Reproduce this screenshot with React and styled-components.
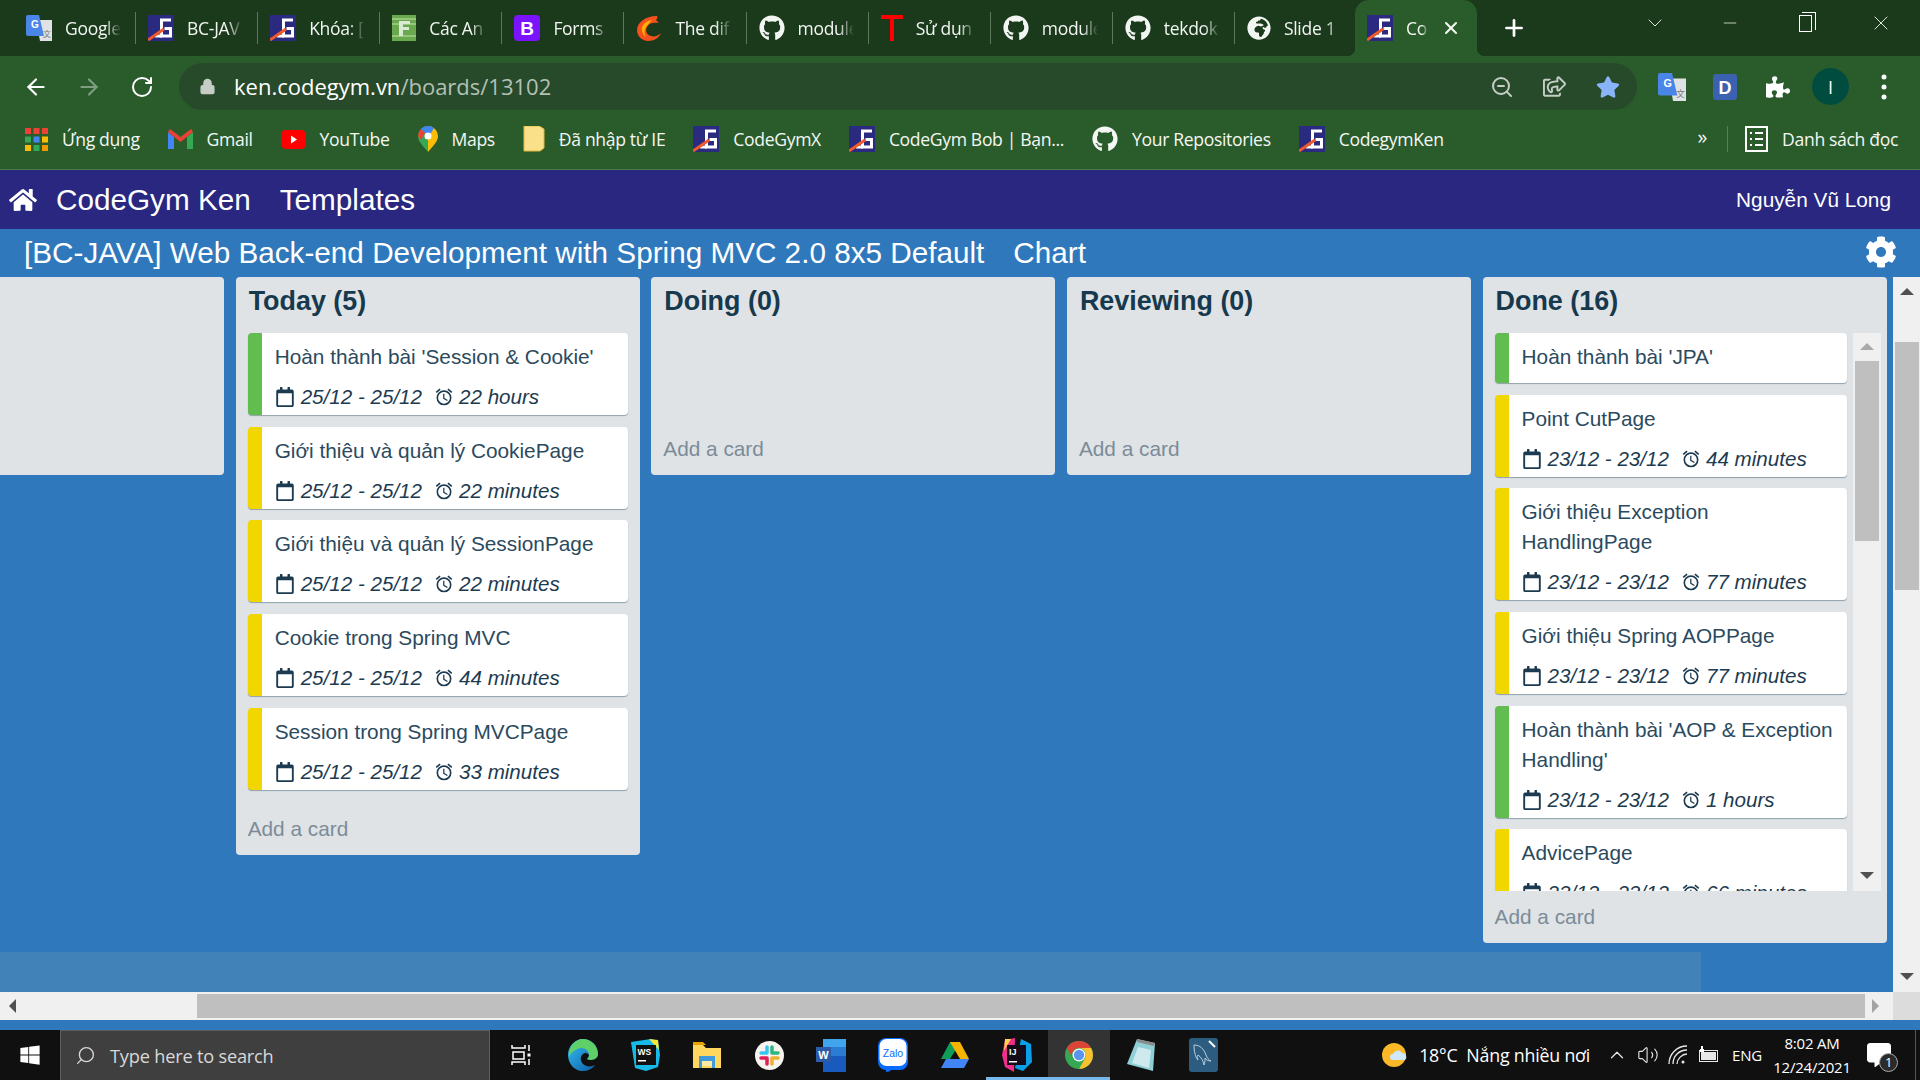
import React from 'react';
import styled, { createGlobalStyle } from 'styled-components';
import { ArrowLeft, ArrowRight, RotateCw, Search, ZoomOut, Volume2, ChevronUp, ChevronDown, Minus, X, Plus, Lock } from 'lucide-react';
import { FaGithub, FaGlobeAfrica, FaHome, FaCog, FaRegCalendar, FaStar, FaRegShareSquare, FaPuzzlePiece, FaWindows, FaCommentAlt } from 'react-icons/fa';
import { MdOutlineAlarm } from 'react-icons/md';

const GlobalStyle = createGlobalStyle`
  html, body { margin: 0; padding: 0; background: #2f78bc; }
  * { box-sizing: border-box; }
`;

const CHROME_FONT = `"Open Sans", "Noto Sans", sans-serif`;

const Page = styled.div`
  width: 1920px;
  height: 1080px;
  overflow: hidden;
  display: flex;
  flex-direction: column;
  font-family: "Liberation Sans", Arial, sans-serif;
`;

/* browser chrome */
const TabStrip = styled.div`
  height: 56px;
  background: #1a3a1b;
  display: flex;
  align-items: center;
  padding-left: 14px;
  font-family: ${CHROME_FONT};
`;

const Tab = styled.div`
  width: 122.1px;
  display: flex;
  align-items: center;
  gap: 13px;
  padding: 0 14px 0 12px;
  color: #f2f5f2;
  font-size: 17.5px;
  letter-spacing: -0.3px;
  height: 32px;
  border-right: ${(p) => (p.$last ? 'none' : '1px solid #5b7a5c')};
`;

const ActiveTab = styled(Tab)`
  height: 56px;
  width: 122px;
  margin-left: -2px;
  padding-right: 16px;
  background: #2a5c2b;
  border-right: none;
  border-radius: 14px 14px 0 0;
  position: relative;
  &::before,
  &::after {
    content: '';
    position: absolute;
    bottom: 0;
    width: 8px;
    height: 8px;
  }
  &::before {
    left: -8px;
    background: radial-gradient(circle at 0 0, transparent 8px, #2a5c2b 8.5px);
  }
  &::after {
    right: -8px;
    background: radial-gradient(circle at 100% 0, transparent 8px, #2a5c2b 8.5px);
  }
`;

const TabLabel = styled.span`
  flex: 1;
  min-width: 0;
  overflow: hidden;
  white-space: nowrap;
  -webkit-mask-image: linear-gradient(to right, #000 72%, transparent);
  mask-image: linear-gradient(to right, #000 72%, transparent);
`;

const NewTab = styled.div`
  width: 74px;
  display: flex;
  justify-content: center;
  color: #fff;
`;

const WindowControls = styled.div`
  margin-left: auto;
  display: flex;
  align-items: center;
  color: #dfe6df;
  margin-top: -10px;
  padding-right: 1px;
`;

const WindowButton = styled.div`
  width: 75.5px;
  display: flex;
  justify-content: center;
`;

const RestoreIcon = styled.div`
  width: 13px;
  height: 17px;
  border: 1px solid #fff;
  position: relative;
  &::after {
    content: '';
    position: absolute;
    top: -4px;
    right: -5px;
    width: 13px;
    height: 17px;
    border-top: 1px solid #fff;
    border-right: 1px solid #fff;
  }
`;

const Toolbar = styled.div`
  height: 56px;
  background: #2a5c2b;
  display: flex;
  align-items: center;
  padding-left: 9px;
  padding-top: 5px;
  font-family: ${CHROME_FONT};
`;

const ToolButton = styled.div`
  width: 53px;
  display: flex;
  justify-content: center;
  align-items: center;
  color: ${(p) => p.$color || '#fff'};
`;

const UrlBar = styled.div`
  width: 1458px;
  height: 47px;
  margin-left: 11px;
  margin-right: 8px;
  border-radius: 24px;
  background: #274a2b;
  display: flex;
  align-items: center;
  padding-left: 20px;
  padding-right: 3px;
`;

const UrlText = styled.div`
  margin: -2px 0 0 18px;
  flex: 1;
  font-size: 22px;
  color: #fff;
  & span { color: #b4c0b5; }
`;

const Avatar = styled.div`
  width: 37px;
  height: 37px;
  border-radius: 50%;
  background: #004d40;
  color: #fff;
  font-size: 18px;
  display: flex;
  justify-content: center;
  align-items: center;
`;

const BookmarkBar = styled.div`
  height: 58px;
  background: #2a5c2b;
  border-bottom: 1px solid #4d7a4e;
  display: flex;
  align-items: center;
  padding-left: 25px;
  padding-bottom: 3px;
  font-family: ${CHROME_FONT};
  font-size: 17.6px;
  letter-spacing: -0.35px;
  color: #f4f7f4;
`;

const Bookmark = styled.div`
  display: flex;
  align-items: center;
  gap: 14px;
  margin-right: 28px;
  white-space: nowrap;
`;

const BookmarkMore = styled.div`
  margin-left: auto;
  font-size: 20px;
  padding-right: 20px;
  border-right: 1px solid #5b7a5c;
  height: 26px;
  line-height: 22px;
`;

const ReadingList = styled(Bookmark)`
  margin: 0 22px 0 17px;
`;

/* app */
const Nav = styled.div`
  height: 59px;
  background: #29277f;
  color: #fff;
  display: flex;
  align-items: center;
  padding: 1px 29px 0 9px;
  font-size: 29.7px;
`;

const NavLink = styled.div`
  margin-left: ${(p) => p.$gap}px;
`;

const NavUser = styled.div`
  margin-left: auto;
  font-size: 20.8px;
`;

const BoardHeader = styled.div`
  height: 48px;
  background: #2f78bc;
  color: #fff;
  display: flex;
  align-items: center;
  padding: 0 24px;
  font-size: 29.7px;
  & > span + span { margin-left: 29px; }
  & > svg { margin-left: auto; margin-right: -1px; margin-top: -3px; }
`;

const Workspace = styled.div`
  flex: 1;
  min-height: 0;
  display: flex;
  background: #2f78bc;
`;

const BoardArea = styled.div`
  width: 1893px;
  display: flex;
  flex-direction: column;
`;

const Lists = styled.div`
  height: 675px;
  display: flex;
  align-items: flex-start;
  gap: 11.65px;
`;

const List = styled.div`
  width: ${(p) => p.$width || 404}px;
  flex-shrink: 0;
  background: #dfe3e6;
  border-radius: ${(p) => (p.$cut ? '0 4px 4px 0' : '4px')};
  height: ${(p) => (p.$cut ? '198px' : 'auto')};
`;

const ListTitle = styled.div`
  height: 56px;
  padding: 6px 0 0 13px;
  font-weight: bold;
  font-size: 26.9px;
  line-height: 36px;
  color: #17394d;
`;

const CardScroller = styled.div`
  display: flex;
  justify-content: space-between;
  padding: 0 6px 0 12px;
  height: 558px;
  overflow: hidden;
`;

const CardList = styled.div`
  padding: 0 12px 1.5px;
  min-height: 90px;
`;

const Column = styled.div`
  width: 352px;
`;

const Card = styled.div`
  display: flex;
  flex-direction: column;
  background: #fff;
  border-radius: 4px;
  border-left: 14px solid ${(p) => (p.$done ? '#61bd4f' : '#f2d600')};
  box-shadow: 0 1px 1px #8fa0ac;
  padding: 9px 8px 0 13px;
  margin-bottom: 11.7px;
  color: #2b4a5e;
  font-size: 20.8px;
  line-height: 30px;
`;

const CardTitle = styled.div`
  margin-bottom: 11px;
`;

const CardMeta = styled.div`
  display: flex;
  align-items: center;
  height: 28px;
  margin-bottom: 4px;
  font-style: italic;
  color: #1d3b50;
  font-size: 20.6px;
  & > svg { margin-right: 6px; }
`;

const MetaSpent = styled.span`
  margin-left: 12px;
  display: flex;
  align-items: center;
  gap: 5px;
`;

const AddCard = styled.div`
  height: 52px;
  padding-left: 12px;
  display: flex;
  align-items: center;
  color: #7b8c98;
  font-size: 20.8px;
`;

const Band = styled.div`
  width: 1701px;
  height: 40px;
  background: #4182b9;
`;

const ScrollTrack = styled.div`
  background: #f0f0f0;
  display: flex;
  flex-direction: ${(p) => (p.$horizontal ? 'row' : 'column')};
  align-items: center;
  position: relative;
`;

const InnerScroll = styled(ScrollTrack)`
  width: 28px;
  height: 558px;
  padding-top: 10px;
`;

const PageScroll = styled(ScrollTrack)`
  width: 27px;
  height: 715px;
  padding-top: 11px;
`;

const BottomBar = styled.div`
  height: 28px;
  display: flex;
`;

const HorizontalScroll = styled(ScrollTrack)`
  width: 1893px;
  padding-left: 9px;
`;

const Corner = styled.div`
  width: 27px;
  background: #dcdcdc;
`;

const Thumb = styled.div`
  background: #bfbfbf;
  flex-shrink: 0;
`;

const VerticalThumb = styled(Thumb)`
  width: 24px;
  height: ${(p) => p.$size}px;
  margin-top: ${(p) => p.$offset}px;
`;

const HorizontalThumb = styled(Thumb)`
  height: 24px;
  width: 1668px;
  margin-left: 181px;
`;

const Arrow = styled.div`
  width: 0;
  height: 0;
  flex-shrink: 0;
  border-style: solid;
  border-color: transparent;
  ${(p) => p.$dir === 'up' && `border-width: 0 7px 7px; border-bottom-color: ${p.$color};`}
  ${(p) => p.$dir === 'down' && `border-width: 7px 7px 0; border-top-color: ${p.$color}; margin-top: auto; margin-bottom: 12px;`}
  ${(p) => p.$dir === 'left' && `border-width: 7px 7px 7px 0; border-right-color: ${p.$color};`}
  ${(p) => p.$dir === 'right' && `border-width: 7px 0 7px 7px; border-left-color: ${p.$color}; margin-left: 7px;`}
`;

const BlueStrip = styled.div`
  height: 10px;
  background: #2f78bc;
`;

/* taskbar */
const Taskbar = styled.div`
  height: 50px;
  background: #101010;
  display: flex;
  align-items: stretch;
  color: #fff;
  font-family: ${CHROME_FONT};
`;

const StartButton = styled.div`
  width: 60px;
  display: flex;
  align-items: center;
  justify-content: center;
`;

const SearchBox = styled.div`
  width: 430px;
  background: #3f3f3f;
  border: 1px solid #5e5e5e;
  border-bottom: none;
  display: flex;
  align-items: center;
  gap: 14px;
  padding-left: 14px;
  font-size: 18.2px;
  color: #d8d8d8;
  letter-spacing: -0.2px;
  & svg { transform: scaleX(-1); }
`;

const TaskIcon = styled.div`
  width: 62px;
  display: flex;
  align-items: center;
  justify-content: center;
  background: ${(p) => (p.$active ? '#333' : 'transparent')};
  box-shadow: ${(p) => (p.$open ? 'inset 0 -3px 0 #76b9ed' : 'none')};
`;

const Tray = styled.div`
  margin-left: auto;
  display: flex;
  align-items: center;
  font-size: 17.8px;
  letter-spacing: -0.2px;
  white-space: nowrap;
`;

const Weather = styled.div`
  display: flex;
  align-items: center;
  gap: 11px;
  margin-right: 12px;
`;

const TrayIcon = styled.div`
  width: 30.5px;
  display: flex;
  justify-content: center;
  color: #e8e8e8;
`;

const TrayLang = styled.div`
  margin-left: 8px;
  font-size: 15px;
`;

const Clock = styled.div`
  width: 82px;
  margin-left: 9px;
  text-align: center;
  font-size: 15px;
  line-height: 24px;
`;

const Notify = styled.div`
  width: 52px;
  display: flex;
  justify-content: center;
  position: relative;
  margin-right: 10px;
`;

const NotifyBadge = styled.span`
  position: absolute;
  left: 26px;
  top: 10px;
  width: 19px;
  height: 19px;
  border-radius: 50%;
  background: #2b2b2b;
  border: 1px solid #aaa;
  font-size: 13px;
  line-height: 17px;
  text-align: center;
`;

const DesktopEdge = styled.div`
  width: 1px;
  height: 50px;
  background: #555;
  margin-right: 4px;
`;

/* small logos */
const CodeGymLogo = ({ size = 26 }) => (
  <svg width={size} height={size} viewBox="0 0 26 26">
    <rect width="26" height="26" fill="#2a2a80" />
    <path d="M23 5H13.500V21h9V13.500h-6" fill="none" stroke="#fff" strokeWidth="3" />
    <path d="M7 21h7" stroke="#fff" strokeWidth="3" />
    <path d="M0 25L16 14" stroke="#f0592a" strokeWidth="3" />
  </svg>
);

const TranslateLogo = ({ size = 26 }) => (
  <svg width={size} height={size} viewBox="0 0 26 26">
    <path d="M10 5h16v21H14z" fill="#dfe3e6" />
    <path d="M0 2Q0 0 2 0h11l5 21H2q-2 0-2-2z" fill="#4a86e8" />
    <text x="5" y="13" fontFamily="Liberation Sans" fontWeight="bold" fontSize="10" fill="#fff">G</text>
    <text x="17" y="22" fontFamily="Noto Sans CJK SC" fontSize="8" fill="#777">文</text>
  </svg>
);

const SheetsLogo = () => (
  <svg width="24" height="26" viewBox="0 0 24 26">
    <rect width="24" height="26" fill="#6aa84f" />
    <path d="M0 4h24M0 9h24M0 21h24" stroke="#a5cf85" strokeWidth="1.5" />
    <path d="M7 6h11v3h-7v3h6v3h-6v6H7z" fill="#d9ead3" />
  </svg>
);

const BootstrapLogo = () => (
  <svg width="26" height="26" viewBox="0 0 26 26">
    <rect width="26" height="26" rx="4" fill="#7a14ff" />
    <text x="13" y="20" textAnchor="middle" fontFamily="Liberation Sans" fontWeight="bold" fontSize="19" fill="#fff">B</text>
  </svg>
);

const SwirlLogo = () => (
  <svg width="26" height="26" viewBox="0 0 26 26">
    <path d="M21 1C9 1 1 8 1 15c0 7 6 11 11 11 6 0 11-3 13-8-3 3-7 4-10 3-4-1-6-5-4-9 2-4 6-5 12-4l-3-3c1-1 2-3 1-4z" fill="#f4511e" />
    <path d="M16 5C9 6 5 11 6 16c1 3 2 5 4 6-2-3-2-7 0-10 2-3 4-5 6-7z" fill="#ffb300" />
  </svg>
);

const TLogo = () => (
  <svg width="22" height="26" viewBox="0 0 22 26">
    <path d="M0 0h22v4H13v22H9V4H0z" fill="#f00" />
  </svg>
);

const AppsGrid = () => (
  <svg width="23" height="23" viewBox="0 0 23 23">
    {[0, 1, 2].map((row) =>
      [0, 1, 2].map((col) => (
        <rect
          key={`${row}-${col}`}
          x={col * 8.5}
          y={row * 8.5}
          width="6"
          height="6"
          fill={[['#ea4335', '#ea4335', '#ea4335'], ['#34a853', '#4285f4', '#fbbc05'], ['#fbbc05', '#34a853', '#f29900']][row][col]}
        />
      ))
    )}
  </svg>
);

const GmailLogo = () => (
  <svg width="25" height="20" viewBox="0 0 25 20">
    <path d="M0 3v17h6V8z" fill="#4285f4" />
    <path d="M25 3v17h-6V8z" fill="#34a853" />
    <path d="M0 3l12.5 10L25 3l-2-3-10.500 8L2 0z" fill="#ea4335" />
  </svg>
);

const YoutubeLogo = () => (
  <svg width="25" height="19" viewBox="0 0 25 19">
    <rect width="25" height="19" rx="5" fill="#f00" />
    <path d="M10 5.500l6 4-6 4z" fill="#fff" />
  </svg>
);

const MapsLogo = () => (
  <svg width="20" height="26" viewBox="0 0 20 26">
    <path d="M10 0a10 10 0 0 0-10 10c0 5 4 9 10 16z" fill="#34a853" />
    <path d="M10 0a10 10 0 0 1 10 10c0 5-4 9-10 16z" fill="#fbbc05" />
    <path d="M3 3a10 10 0 0 1 13-1l-3 5H7z" fill="#4285f4" />
    <path d="M0 10a10 10 0 0 1 3-7l4 4-4 7z" fill="#ea4335" />
    <circle cx="10" cy="10" r="3.500" fill="#fff" />
  </svg>
);

const FolderLogo = () => (
  <svg width="22" height="26" viewBox="0 0 22 26">
    <path d="M1 0h15l5 3v19l-4 3H1z" fill="#fbe08a" stroke="#e0b93f" />
  </svg>
);

const ReadingIcon = () => (
  <svg width="23" height="26" viewBox="0 0 23 26" fill="none" stroke="#fff" strokeWidth="2">
    <rect x="1" y="1" width="21" height="24" />
    <path d="M5 7h2M10 7h8M5 13h2M10 13h8M5 19h2M10 19h8" />
  </svg>
);

const EdgeLogo = () => (
  <svg width="30" height="32" viewBox="0 0 30 32">
    <defs>
      <linearGradient id="edgeFill" x1="0" y1="0" x2="1" y2="1">
        <stop offset="0" stopColor="#35c1f1" />
        <stop offset="1" stopColor="#0c59a4" />
      </linearGradient>
    </defs>
    <path d="M15 0C7 0 0 7 0 16c0 9 7 16 14 16 6 0 10-2 13-6-4 2-9 2-12-1-3-3-3-8 0-10 2-2 5-1 6 1 0 2-1 3-2 4 3 2 10 1 11-5C30 7 24 0 15 0z" fill="url(#edgeFill)" />
    <path d="M15 0c8 0 15 7 15 15 0 6-8 7-11 5 1-1 2-2 2-4 0-5-6-9-12-6C5 12 2 15 1 18 0 8 7 0 15 0z" fill="#5fd068" />
  </svg>
);

const WebStormLogo = () => (
  <svg width="29" height="32" viewBox="0 0 29 32">
    <path d="M0 3l20-3 7 2 2 14-2 12-12 4-11-3z" fill="#16b9e8" />
    <path d="M18 0l9 1 1 10z" fill="#f6e73a" />
    <rect x="5" y="6" width="20" height="20" fill="#111" />
    <text x="6.500" y="16" fontFamily="Liberation Sans" fontWeight="bold" fontSize="8.500" fill="#fff">WS</text>
    <rect x="7" y="21" width="8" height="1.500" fill="#fff" />
  </svg>
);

const ExplorerLogo = () => (
  <svg width="28" height="26" viewBox="0 0 28 26">
    <path d="M0 3h10l3 3h15v20H0z" fill="#ffd75e" />
    <path d="M0 0h10l3 3H0z" fill="#e8a200" />
    <path d="M6 14h16v12h-3v-7h-10v7H6z" fill="#3f9bd9" />
    <rect x="9" y="19" width="10" height="5" fill="#ffe9a6" />
  </svg>
);

const SlackLogo = () => (
  <svg width="29" height="29" viewBox="0 0 29 29">
    <circle cx="14.500" cy="14.500" r="14.500" fill="#f7f3ef" />
    <g strokeWidth="3.500" strokeLinecap="round" fill="none">
      <path d="M12 6v6M6 12h6" stroke="#36c5f0" />
      <path d="M23 12h-6M17 6v6" stroke="#2eb67d" />
      <path d="M17 23v-6M23 17h-6" stroke="#ecb22e" />
      <path d="M6 17h6M12 23v-6" stroke="#e01e5a" />
    </g>
  </svg>
);

const WordLogo = () => (
  <svg width="30" height="33" viewBox="0 0 30 33">
    <path d="M7 0h23v33H7z" fill="#185abd" />
    <path d="M7 0h23v8H7z" fill="#41a5ee" />
    <path d="M7 8h23v9H7z" fill="#2b7cd3" />
    <rect y="8" width="15" height="15" fill="#2a5caa" />
    <text x="7.500" y="20" textAnchor="middle" fontFamily="Liberation Sans" fontWeight="bold" fontSize="11" fill="#fff">W</text>
  </svg>
);

const ZaloLogo = () => (
  <svg width="30" height="35" viewBox="0 0 30 35">
    <rect width="30" height="32" rx="8" fill="#0a6cff" />
    <rect x="1.500" y="1" width="27" height="27" rx="7" fill="#fff" />
    <path d="M8 34q4 0 6-3h-6z" fill="#0a6cff" />
    <text x="15" y="19" textAnchor="middle" fontFamily="Liberation Sans" fontSize="10.500" fill="#0a6cff">Zalo</text>
  </svg>
);

const DriveLogo = () => (
  <svg width="28" height="26" viewBox="0 0 28 26">
    <path d="M9 0h10l-5 9-5 8H0z" fill="#0f9d58" />
    <path d="M9 0h10l9 17h-9z" fill="#f4b400" />
    <path d="M5 17h23l-5 9H0z" fill="#4285f4" />
  </svg>
);

const IdeaLogo = () => (
  <svg width="30" height="34" viewBox="0 0 30 34">
    <path d="M3 2l10-2-1 34-9-5-3-12z" fill="#f02e8c" />
    <path d="M3 1h6L2 13z" fill="#fcd34d" />
    <path d="M19 1l10 5 1 18-9 9-8-3z" fill="#0c9fe8" />
    <rect x="5" y="7" width="19" height="20" fill="#140c18" />
    <text x="7" y="17" fontFamily="Liberation Sans" fontWeight="bold" fontSize="9" fill="#fff">IJ</text>
    <rect x="7" y="23" width="8" height="1.500" fill="#fff" />
  </svg>
);

const ChromeLogo = () => (
  <svg width="28" height="28" viewBox="0 0 28 28">
    <circle cx="14" cy="14" r="14" fill="#34a853" />
    <path d="M14 0a14 14 0 0 1 12.100 7H14a7 7 0 0 0-6.100 10.500L1.900 7A14 14 0 0 1 14 0z" fill="#db4437" />
    <path d="M26.100 7A14 14 0 0 1 14 28l6-10.500A7 7 0 0 0 14 7z" fill="#fbc02d" />
    <circle cx="14" cy="14" r="6.500" fill="#fff" />
    <circle cx="14" cy="14" r="5.200" fill="#5b94ee" />
  </svg>
);

const NotepadLogo = () => (
  <svg width="28" height="32" viewBox="0 0 28 32">
    <path d="M10 0l18 4-2 28L0 25z" fill="#8fd0d6" />
    <path d="M10 0l18 4-1 3-17-4z" fill="#8b8b8b" />
    <path d="M11 8l13 3-2 18-17-5z" fill="#cfeaee" />
  </svg>
);

const MysqlLogo = () => (
  <svg width="29" height="34" viewBox="0 0 29 34">
    <rect width="29" height="34" rx="3" fill="#2c5d80" />
    <path d="M5 7c6 0 10 4 12 10 1 3 3 5 5 6-3 0-5-1-6-3 0 3 0 5-1 7-1-5-3-8-6-10-1 2-1 3 0 5-3-3-4-10-4-15z" fill="none" stroke="#b9cfdc" strokeWidth="1" />
    <path d="M20 3l6 6" stroke="#fff" strokeWidth="2" />
  </svg>
);

const WeatherLogo = () => (
  <svg width="26" height="26" viewBox="0 0 26 26">
    <circle cx="12" cy="13" r="12" fill="#fbb829" />
    <path d="M11 18a3 3 0 0 1 0-6 5 5 0 0 1 9-1 4 4 0 0 1 3 7z" fill="#cfe9fb" />
  </svg>
);

const WifiIcon = () => (
  <svg width="20" height="20" viewBox="0 0 20 20" fill="none" stroke="#e8e8e8" strokeWidth="1.300">
    <path d="M1 19C1 9 9 1 19 1" />
    <path d="M5 19C5 11 11 5 19 5" />
    <path d="M9 19c0-5 5-10 10-10" />
    <circle cx="15" cy="17" r="1.500" fill="#e8e8e8" stroke="none" />
  </svg>
);

const BatteryIcon = () => (
  <svg width="20" height="18" viewBox="0 0 20 18">
    <rect x="0.500" y="4.500" width="18" height="11" fill="none" stroke="#e8e8e8" />
    <rect x="2" y="6" width="15" height="8" fill="#e8e8e8" />
    <path d="M2 0h2v3h1v3H1V3h1z" fill="#fff" />
  </svg>
);

const tabs = [
  { label: 'Google', icon: <TranslateLogo /> },
  { label: 'BC-JAV', icon: <CodeGymLogo /> },
  { label: 'Khóa: [', icon: <CodeGymLogo /> },
  { label: 'Các An', icon: <SheetsLogo /> },
  { label: 'Forms ·', icon: <BootstrapLogo /> },
  { label: 'The dif', icon: <SwirlLogo /> },
  { label: 'module', icon: <FaGithub size={26} /> },
  { label: 'Sử dụn', icon: <TLogo /> },
  { label: 'module', icon: <FaGithub size={26} /> },
  { label: 'tekdok', icon: <FaGithub size={26} /> },
  { label: 'Slide 1', icon: <FaGlobeAfrica size={24} />, last: true },
];

const bookmarks = [
  { label: 'Ứng dụng', icon: <AppsGrid /> },
  { label: 'Gmail', icon: <GmailLogo /> },
  { label: 'YouTube', icon: <YoutubeLogo /> },
  { label: 'Maps', icon: <MapsLogo /> },
  { label: 'Đã nhập từ IE', icon: <FolderLogo /> },
  { label: 'CodeGymX', icon: <CodeGymLogo /> },
  { label: 'CodeGym Bob | Bạn...', icon: <CodeGymLogo /> },
  { label: 'Your Repositories', icon: <FaGithub size={26} /> },
  { label: 'CodegymKen', icon: <CodeGymLogo /> },
];

const todayCards = [
  { title: "Hoàn thành bài 'Session & Cookie'", done: true, date: '25/12 - 25/12', spent: '22 hours' },
  { title: 'Giới thiệu và quản lý CookiePage', date: '25/12 - 25/12', spent: '22 minutes' },
  { title: 'Giới thiệu và quản lý SessionPage', date: '25/12 - 25/12', spent: '22 minutes' },
  { title: 'Cookie trong Spring MVC', date: '25/12 - 25/12', spent: '44 minutes' },
  { title: 'Session trong Spring MVCPage', date: '25/12 - 25/12', spent: '33 minutes' },
];

const doneCards = [
  { title: "Hoàn thành bài 'JPA'", done: true },
  { title: 'Point CutPage', date: '23/12 - 23/12', spent: '44 minutes' },
  { title: 'Giới thiệu Exception HandlingPage', date: '23/12 - 23/12', spent: '77 minutes' },
  { title: 'Giới thiệu Spring AOPPage', date: '23/12 - 23/12', spent: '77 minutes' },
  { title: "Hoàn thành bài 'AOP & Exception Handling'", done: true, date: '23/12 - 23/12', spent: '1 hours' },
  { title: 'AdvicePage', date: '23/12 - 23/12', spent: '66 minutes' },
];

const taskIcons = [
  { key: 'edge', icon: <EdgeLogo /> },
  { key: 'ws', icon: <WebStormLogo /> },
  { key: 'explorer', icon: <ExplorerLogo /> },
  { key: 'slack', icon: <SlackLogo /> },
  { key: 'word', icon: <WordLogo /> },
  { key: 'zalo', icon: <ZaloLogo /> },
  { key: 'drive', icon: <DriveLogo /> },
  { key: 'idea', icon: <IdeaLogo />, open: true },
  { key: 'chrome', icon: <ChromeLogo />, open: true, active: true },
  { key: 'notepad', icon: <NotepadLogo /> },
  { key: 'mysql', icon: <MysqlLogo /> },
];

const BoardCard = ({ card }) => (
  <Card $done={card.done}>
    <CardTitle>{card.title}</CardTitle>
    {card.date && (
      <CardMeta>
        <FaRegCalendar size={20} />
        {card.date}
        <MetaSpent>
          <MdOutlineAlarm size={20} />
          {card.spent}
        </MetaSpent>
      </CardMeta>
    )}
  </Card>
);

export default function App() {
  return (
    <Page>
      <GlobalStyle />
      <TabStrip>
        {tabs.map((tab, i) => (
          <Tab key={i} $last={tab.last}>
            {tab.icon}
            <TabLabel>{tab.label}</TabLabel>
          </Tab>
        ))}
        <ActiveTab>
          <CodeGymLogo />
          <TabLabel>Co</TabLabel>
          <X size={20} strokeWidth={2.5} />
        </ActiveTab>
        <NewTab>
          <Plus size={26} strokeWidth={2.5} />
        </NewTab>
        <WindowControls>
          <WindowButton><ChevronDown size={24} strokeWidth={1} /></WindowButton>
          <WindowButton><Minus size={20} strokeWidth={1} /></WindowButton>
          <WindowButton><RestoreIcon /></WindowButton>
          <WindowButton><X size={24} strokeWidth={1} /></WindowButton>
        </WindowControls>
      </TabStrip>

      <Toolbar>
        <ToolButton><ArrowLeft size={26} /></ToolButton>
        <ToolButton $color="#7f9d80"><ArrowRight size={26} /></ToolButton>
        <ToolButton><RotateCw size={24} /></ToolButton>
        <UrlBar>
          <Lock size={17} fill="#c6cdc6" color="#c6cdc6" />
          <UrlText>ken.codegym.vn<span>/boards/13102</span></UrlText>
          <ToolButton $color="#c6cdc6"><ZoomOut size={24} /></ToolButton>
          <ToolButton $color="#c6cdc6"><FaRegShareSquare size={23} /></ToolButton>
          <ToolButton $color="#8ab4f8"><FaStar size={24} /></ToolButton>
        </UrlBar>
        <ToolButton><TranslateLogo size={28} /></ToolButton>
        <ToolButton>
          <svg width="24" height="26" viewBox="0 0 24 26">
            <rect width="24" height="26" rx="3" fill="#3b62b0" />
            <text x="12" y="20" textAnchor="middle" fontFamily="Liberation Sans" fontWeight="bold" fontSize="18" fill="#fff">D</text>
          </svg>
        </ToolButton>
        <ToolButton><FaPuzzlePiece size={24} /></ToolButton>
        <ToolButton><Avatar>I</Avatar></ToolButton>
        <ToolButton>
          <svg width="6" height="26" viewBox="0 0 6 26" fill="#fff">
            <circle cx="3" cy="3" r="2.500" />
            <circle cx="3" cy="13" r="2.500" />
            <circle cx="3" cy="23" r="2.500" />
          </svg>
        </ToolButton>
      </Toolbar>

      <BookmarkBar>
        {bookmarks.map((item) => (
          <Bookmark key={item.label}>
            {item.icon}
            {item.label}
          </Bookmark>
        ))}
        <BookmarkMore>»</BookmarkMore>
        <ReadingList>
          <ReadingIcon />
          Danh sách đọc
        </ReadingList>
      </BookmarkBar>

      <Nav>
        <FaHome size={28} />
        <NavLink $gap={19}>CodeGym Ken</NavLink>
        <NavLink $gap={29}>Templates</NavLink>
        <NavUser>Nguyễn Vũ Long</NavUser>
      </Nav>

      <BoardHeader>
        <span>[BC-JAVA] Web Back-end Development with Spring MVC 2.0 8x5 Default</span>
        <span>Chart</span>
        <FaCog size={32} />
      </BoardHeader>

      <Workspace>
        <BoardArea>
          <Lists>
            <List $cut $width={224} />
            <List>
              <ListTitle>Today (5)</ListTitle>
              <CardList>
                {todayCards.map((card) => <BoardCard key={card.title} card={card} />)}
              </CardList>
              <AddCard>Add a card</AddCard>
            </List>
            <List>
              <ListTitle>Doing (0)</ListTitle>
              <CardList />
              <AddCard>Add a card</AddCard>
            </List>
            <List>
              <ListTitle>Reviewing (0)</ListTitle>
              <CardList />
              <AddCard>Add a card</AddCard>
            </List>
            <List>
              <ListTitle>Done (16)</ListTitle>
              <CardScroller>
                <Column>
                  {doneCards.map((card) => <BoardCard key={card.title} card={card} />)}
                </Column>
                <InnerScroll>
                  <Arrow $dir="up" $color="#aaa" />
                  <VerticalThumb $size={180} $offset={11} />
                  <Arrow $dir="down" $color="#505050" />
                </InnerScroll>
              </CardScroller>
              <AddCard>Add a card</AddCard>
            </List>
          </Lists>
          <Band />
        </BoardArea>
        <PageScroll>
          <Arrow $dir="up" $color="#505050" />
          <VerticalThumb $size={248} $offset={47} />
          <Arrow $dir="down" $color="#505050" />
        </PageScroll>
      </Workspace>

      <BottomBar>
        <HorizontalScroll $horizontal>
          <Arrow $dir="left" $color="#505050" />
          <HorizontalThumb />
          <Arrow $dir="right" $color="#a3a3a3" />
        </HorizontalScroll>
        <Corner />
      </BottomBar>
      <BlueStrip />

      <Taskbar>
        <StartButton><FaWindows size={22} /></StartButton>
        <SearchBox>
          <Search size={21} strokeWidth={1.5} />
          Type here to search
        </SearchBox>
        <TaskIcon>
          <svg width="20" height="20" viewBox="0 0 20 20" fill="none" stroke="#fff" strokeWidth="1.500">
            <path d="M1 0v3h13V0M2 7h11v7H2zM1 20v-3h13v3M18 0v6M18 14v6" />
            <rect x="16.500" y="8.500" width="3" height="3" fill="#fff" stroke="none" />
          </svg>
        </TaskIcon>
        {taskIcons.map((item) => (
          <TaskIcon key={item.key} $open={item.open} $active={item.active}>{item.icon}</TaskIcon>
        ))}
        <Tray>
          <Weather>
            <WeatherLogo />
            <span>18°C&nbsp;&nbsp;Nắng nhiều nơi</span>
          </Weather>
          <TrayIcon><ChevronUp size={22} strokeWidth={1.3} /></TrayIcon>
          <TrayIcon><Volume2 size={22} strokeWidth={1.2} /></TrayIcon>
          <TrayIcon><WifiIcon /></TrayIcon>
          <TrayIcon><BatteryIcon /></TrayIcon>
          <TrayLang>ENG</TrayLang>
          <Clock>8:02 AM<br />12/24/2021</Clock>
          <Notify>
            <FaCommentAlt size={24} />
            <NotifyBadge>1</NotifyBadge>
          </Notify>
          <DesktopEdge />
        </Tray>
      </Taskbar>
    </Page>
  );
}
